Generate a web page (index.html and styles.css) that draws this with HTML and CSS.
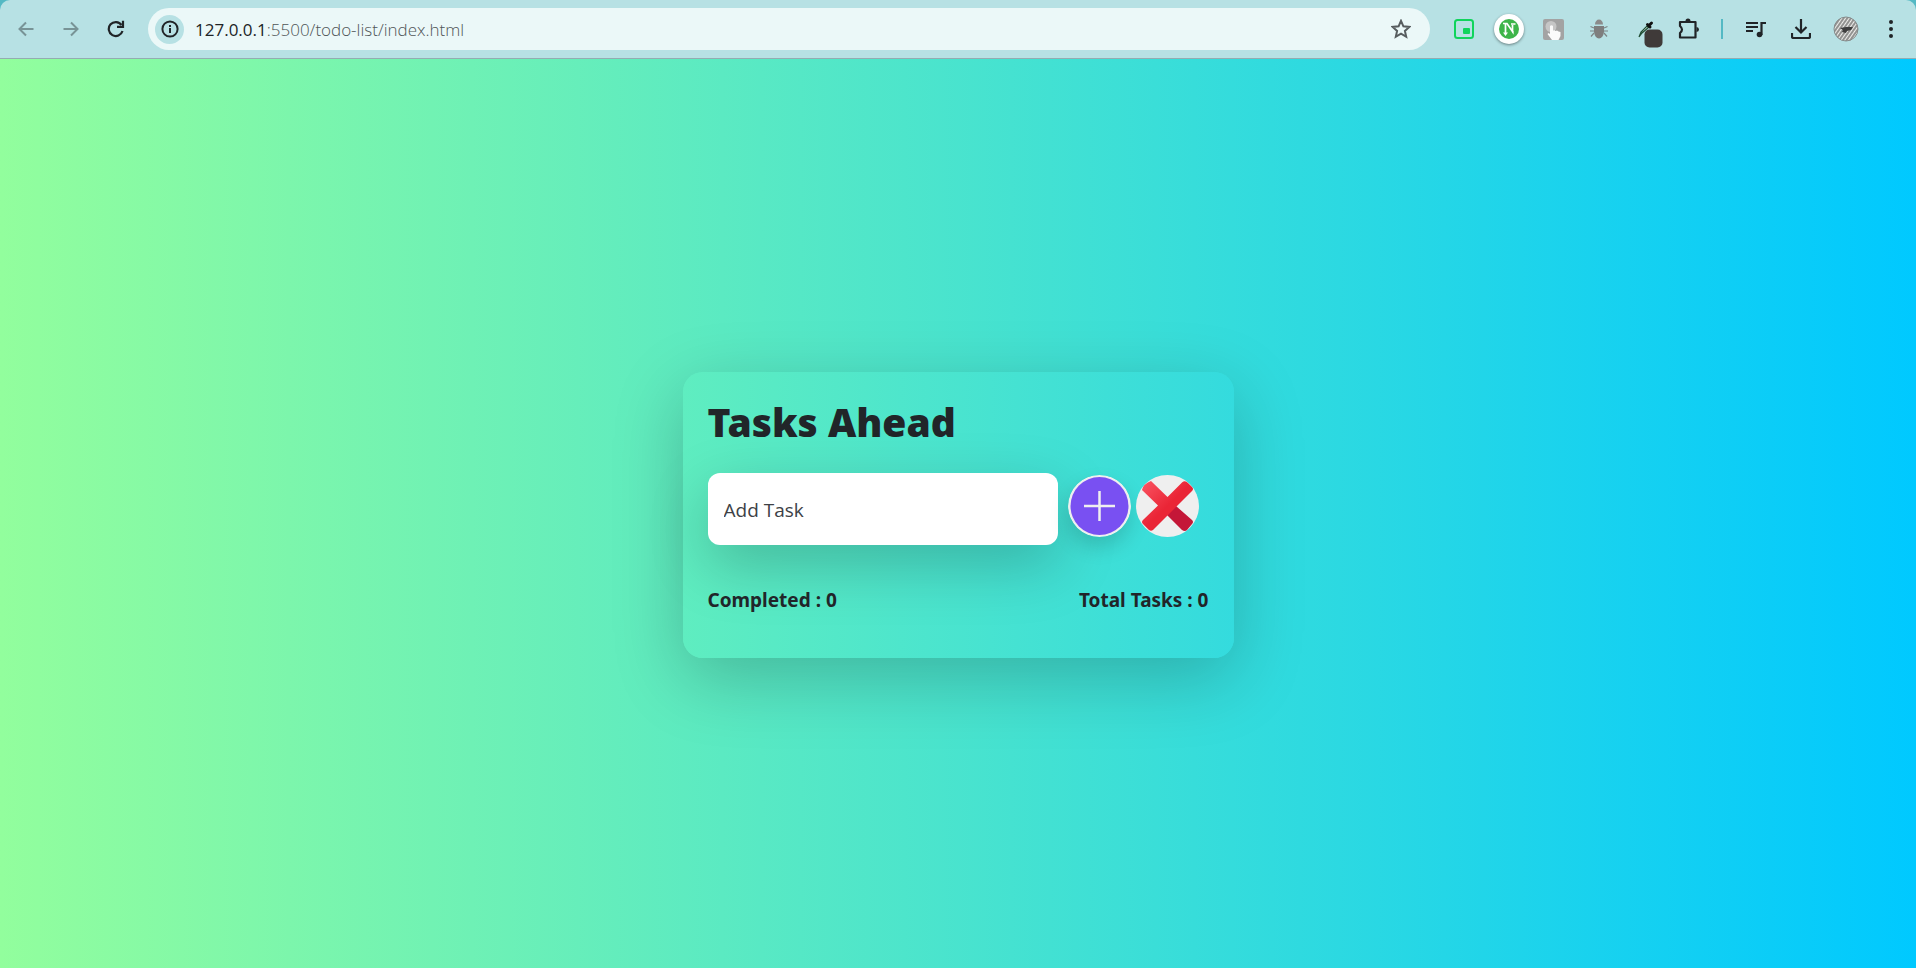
FILE: index.html
```html
<!DOCTYPE html>
<html lang="en">
<head>
<meta charset="utf-8">
<title>Tasks Ahead</title>
<link rel="stylesheet" href="styles.css">
</head>
<body>
<div class="window">
<header class="toolbar">
  <nav class="nav" aria-label="Navigation">
    <button class="tool faded" aria-label="Back"><svg width="16" height="16" viewBox="0 0 16 16" fill="none" stroke="currentColor" stroke-width="2"><path d="M15.500 8H2M8 1.500 1.500 8 8 14.500"/></svg></button>
    <button class="tool faded" aria-label="Forward"><svg width="16" height="16" viewBox="0 0 16 16" fill="none" stroke="currentColor" stroke-width="2"><path d="M.5 8H14M8 1.500 14.500 8 8 14.500"/></svg></button>
    <button class="tool" aria-label="Reload"><svg width="18" height="18" viewBox="0 0 18 18" fill="none" stroke="currentColor" stroke-width="2.200"><path d="M15.500 11A7 7 0 1 1 14.500 5"/><path d="M16 .8V6.800H10"/></svg></button>
  </nav>
  <div class="address">
    <button class="site" aria-label="Site information"><svg width="18" height="18" viewBox="0 0 18 18" fill="none" stroke="currentColor" stroke-width="2"><circle cx="9" cy="9" r="7.600"/><path d="M9 8v5M9 5v2"/></svg></button>
    <a class="url" href="#"><span class="host">127.0.0.1</span>:5500/todo-list/index.html</a>
    <button class="star" aria-label="Bookmark"><svg width="20" height="20" viewBox="0 0 20 20" fill="none" stroke="currentColor" stroke-width="2"><path d="M10 1.800 12.400 7.300 18.400 7.900 13.900 11.900 15.200 17.800 10 14.700 4.800 17.800 6.100 11.900 1.600 7.900 7.600 7.300Z"/></svg></button>
  </div>
  <div class="extensions">
    <button class="tool" aria-label="Picture in picture"><svg width="20" height="20" viewBox="0 0 20 20"><rect x="1" y="1" width="18" height="18" rx="2.500" fill="none" stroke="#10d45c" stroke-width="2"/><rect x="9" y="9" width="7" height="6" rx="1" fill="#10d45c"/></svg></button>
    <button class="tool" aria-label="N extension"><span class="round"><svg width="20" height="20" viewBox="0 0 20 20"><circle cx="10" cy="10" r="10" fill="#3eb54a"/><path d="M4 4.500h4l5.500 8V6M12 5h4.500M6.500 5v9" fill="none" stroke="#fff" stroke-width="1.700"/><path d="M4 13.500h5L6.500 17ZM13 12h1.500v4Z" fill="#fff"/></svg></span></button>
    <button class="tool" aria-label="Click helper"><svg width="21" height="21" viewBox="0 0 21 21"><rect width="21" height="21" rx="2" fill="#a3a3a3"/><circle cx="8" cy="7.500" r="5.500" fill="#c6c6c6"/><path d="M7 7q1.500-1.500 3 0v5l1-1 1.500 1 1.500-.5 1.500 1 2 .5v4l-2 4H9l-4.500-6 1-1L7 15Z" fill="#fafafa"/></svg></button>
    <button class="tool" aria-label="Debugger"><svg width="20" height="20" viewBox="0 0 20 20"><g stroke="#7d8485" stroke-width="1.200" fill="none"><path d="M5 9 1.500 7.500M5 12H1M5 14l-3 3.500M15 9l3.500-1.500M15 12h4M15 14l3 3.500"/></g><path d="M6 5.500a4 5 0 0 1 8 0Z" fill="#8b8b8b"/><path d="M5 7h10v6q-1 6-5 6.500Q6 19 5 13Z" fill="#7e7e7e"/></svg></button>
    <button class="tool picker" aria-label="Color picker"><svg width="26" height="28" viewBox="0 0 26 28"><path d="M1 17 3 12 9 6l1.500 1.500L4 13Z" fill="#dce8dc" stroke="#1e4d34" stroke-width="1.200"/><path d="M9.500 4.500 12 7M11 5.500 13.500 3" fill="none" stroke="#111" stroke-width="3" stroke-linecap="round"/><rect x="6.500" y="9.500" width="18" height="18" rx="5" fill="#3f3a39"/></svg></button>
    <button class="tool" aria-label="Extensions"><svg width="22" height="22" viewBox="0 0 22 22" fill="none" stroke="currentColor" stroke-width="2.200" stroke-linejoin="round"><path d="M2 4h15.500v15.500H2v-4.500q4-3.500 0-7Z"/><path d="M7.500 3a2.500 2.500 0 0 1 5 0ZM18.500 9a2.500 2.500 0 0 1 0 5Z" fill="currentColor" stroke="none"/></svg></button>
    <span class="divider"></span>
    <button class="tool" aria-label="Media"><svg width="20" height="17" viewBox="0 0 20 17" fill="none" stroke="currentColor" stroke-width="2.200"><path d="M0 2h12M0 6h12M0 10h7M15.500 14V2H20"/><circle cx="13.500" cy="13.500" r="2.800" fill="currentColor" stroke="none"/></svg></button>
    <button class="tool" aria-label="Downloads"><svg width="20" height="20" viewBox="0 0 20 20" fill="none" stroke="currentColor" stroke-width="2.200"><path d="M10 0v13M4.500 8 10 13.500 15.500 8M1 14v3.500q0 1.500 1.500 1.500h15q1.500 0 1.500-1.500V14"/></svg></button>
    <button class="tool" aria-label="Profile"><svg width="26" height="26" viewBox="0 0 26 26"><defs><pattern id="hatch" width="3" height="3" patternUnits="userSpaceOnUse" patternTransform="rotate(35)"><rect width="3" height="3" fill="#efefec"/><path d="M1 0V3" stroke="#555" stroke-width="1.200"/></pattern></defs><circle cx="13" cy="13" r="12" fill="url(#hatch)" stroke="#858b8b"/><path d="M7 12 13 11l7 0-2 3-4 1-1 2-4-1 1-2Z" fill="#3e3e3e"/></svg></button>
    <button class="tool" aria-label="Menu"><svg width="4" height="18" viewBox="0 0 4 18" fill="currentColor"><circle cx="2" cy="2" r="2"/><circle cx="2" cy="9" r="2"/><circle cx="2" cy="16" r="2"/></svg></button>
  </div>
</header>
<main class="page">
  <section class="card">
    <h1 class="title">Tasks Ahead</h1>
    <form class="entry">
      <input class="task" type="text" placeholder="Add Task" aria-label="Add Task">
      <button class="action" type="button" aria-label="Add"><svg class="raised" width="63" height="62" viewBox="0 0 63 62"><ellipse cx="31.500" cy="31" rx="31.500" ry="31" fill="#efefef"/><circle cx="31.500" cy="31" r="29" fill="#7950f2"/><path d="M31.500 16v30M16 31h31" stroke="#efefef" stroke-width="2.500"/></svg></button>
      <button class="action" type="button" aria-label="Clear"><svg width="63" height="62" viewBox="0 0 63 62"><defs><linearGradient id="red" x1="0" y1="0" x2="1" y2="1"><stop offset="0" stop-color="#fa5563"/><stop offset=".5" stop-color="#ea2536"/></linearGradient></defs><ellipse cx="31.500" cy="31" rx="31.500" ry="31" fill="#efefef"/><path d="M31 40 40 31 56 45Q58 47 56 49L51 55Q49 57 46 55Z" fill="#c41738"/><path d="M15 6 31.500 22 46 7.500Q49 5 52 8L56 12Q58 14 56 16L17 55Q15 56.500 13 55L7 49Q5 47 7 45L22 30.500 6 15Q7 9 15 6Z" fill="url(#red)"/></svg></button>
    </form>
    <div class="counts"><span>Completed : 0</span><span>Total Tasks : 0</span></div>
  </section>
</main>
</div>
</body>
</html>
```
FILE: styles.css
```css
* { box-sizing: border-box; }
body {
  margin: 0;
  background: #54b9c4;
  color: #212529;
  font-family: "Noto Sans", "Open Sans", sans-serif;
}
button {
  display: flex;
  align-items: center;
  justify-content: center;
  padding: 0;
  border: 0;
  background: none;
  color: #202427;
}
.window { display: flex; flex-direction: column; min-height: 100vh; }
.toolbar {
  display: flex;
  align-items: center;
  height: 59px;
  padding: 0 3px;
  border-bottom: 1px solid #94acb1;
  border-radius: 10px 10px 0 0;
  background: #b7e1e4;
}
.nav { display: flex; }
.tool { width: 45px; height: 42px; flex: none; }
.faded { color: #789396; }
.address {
  display: flex;
  flex: 1;
  align-items: center;
  height: 42px;
  margin: 0 11px 0 10px;
  padding: 0 19px 0 7px;
  border-radius: 21px;
  background: #ebf8f8;
}
.site { width: 29px; height: 29px; border-radius: 50%; background: #b7e1e4; }
.url {
  flex: 1;
  margin-left: 11px;
  color: #4f5557;
  font-family: "Open Sans", sans-serif;
  font-size: 17px;
  font-weight: 300;
  text-decoration: none;
}
.host { color: #202427; font-weight: 400; }
.star { color: #575d5f; }
.extensions { display: flex; align-items: center; }
.picker { padding: 10px 0 0 14px; }
.round {
  display: flex;
  padding: 5px;
  border-radius: 50%;
  background: #fff;
  box-shadow: 0 1px 3px #00000070;
}
.divider { width: 2px; height: 20px; margin: 0 10px; background: #54b9c4; }
.page {
  display: flex;
  flex: 1;
  align-items: center;
  justify-content: center;
  background: linear-gradient(90deg, #92fe9d 0%, #00c9ff 100%);
}
.card {
  width: 551px;
  margin-top: 2px;
  padding: 26px 25px 43px;
  border-radius: 20px;
  background: linear-gradient(90deg, #5fedc0, #34dbde);
  box-shadow: 0 20px 70px #00000036;
}
.title { margin: 0 0 27px; font-size: 39px; font-weight: 900; line-height: 48px; }
.entry { display: flex; align-items: flex-start; gap: 5px; }
.task {
  flex: 0 1 350px;
  min-width: 0;
  height: 72px;
  margin-right: 5px;
  padding: 2px 16px 0;
  border: 0;
  border-radius: 12px;
  background: #fff;
  box-shadow: 0 20px 60px #00000036;
  font: 19px "Open Sans", sans-serif;
}
.task::placeholder { color: #3d4146; opacity: 1; }
.action { margin-top: 2px; border-radius: 50%; }
.raised { border-radius: 50%; box-shadow: 0 10px 20px #00000026; }
.counts {
  display: flex;
  justify-content: space-between;
  margin-top: 40px;
  font-size: 19px;
  font-weight: 700;
  line-height: 30px;
}
```
